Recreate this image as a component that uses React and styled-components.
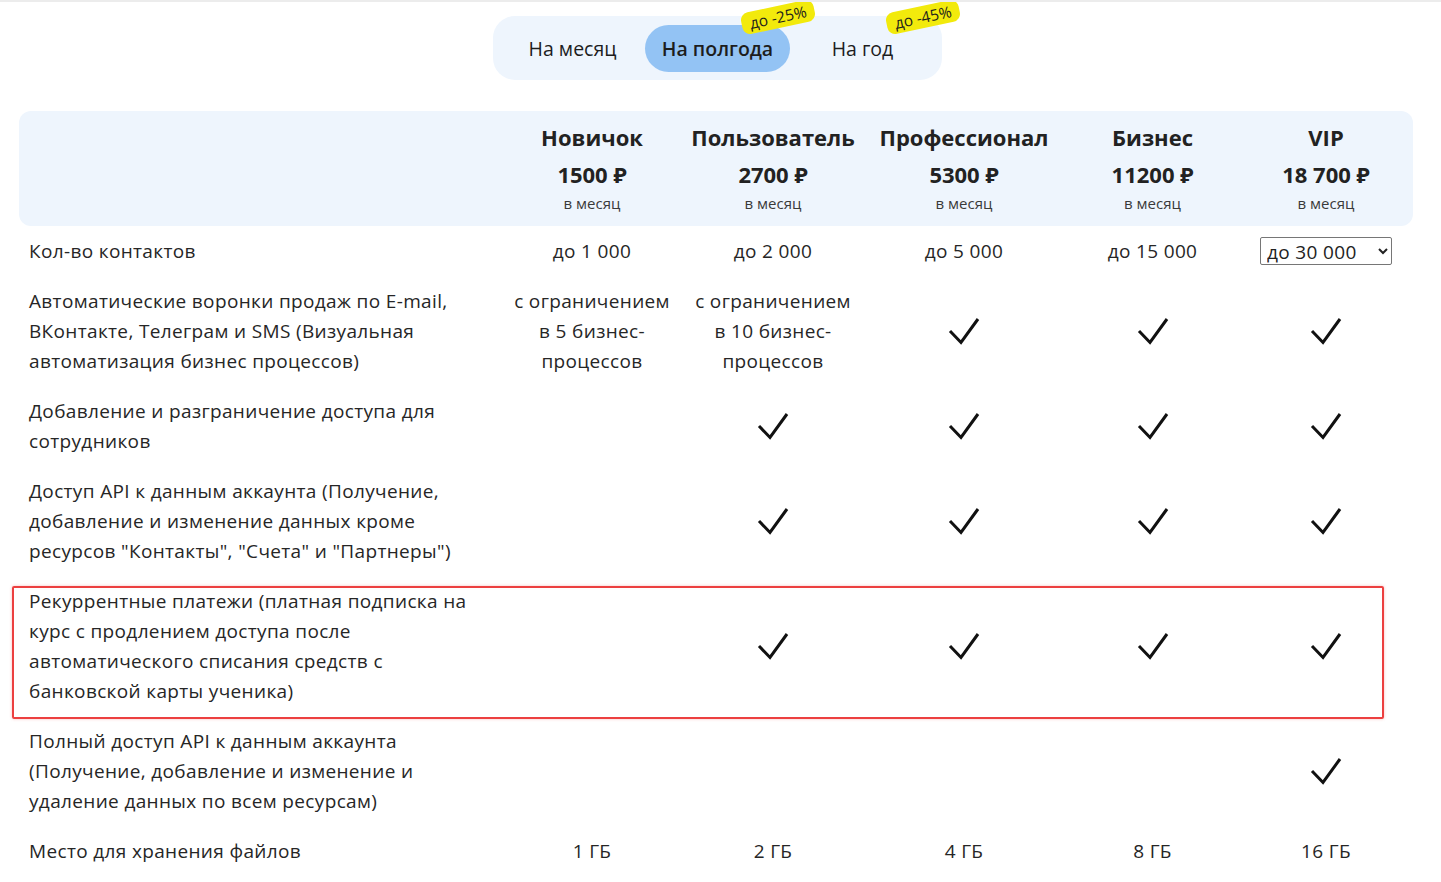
import React from 'react';
import styled, { createGlobalStyle } from 'styled-components';

const GlobalStyle = createGlobalStyle`
    body {
        margin: 0;
        background: #fff;
        font-family: "Open Sans", "Noto Sans", sans-serif;
        color: #222;
        border-top: 2px solid #ececec;
    }
`;

const Page = styled.div`
    padding: 14px 0 0 19px;
    width: 1394px;
`;

const ToggleWrap = styled.div`
    display: flex;
    justify-content: center;
    padding-left: 3px;
`;

const Toggle = styled.div`
    display: flex;
    background: #eef5fd;
    border-radius: 22px;
    padding: 9px 7px 8px;
`;

const TabButton = styled.div`
    position: relative;
    width: 145px;
    height: 47px;
    border-radius: 24px;
    display: flex;
    align-items: center;
    justify-content: center;
    font-size: 19.5px;
    font-weight: ${p => (p.active ? 600 : 500)};
    background: ${p => (p.active ? '#93c3f4' : 'transparent')};
    color: #1d1d1d;
`;

const Badge = styled.span`
    position: absolute;
    top: -19px;
    right: -25px;
    width: 74px;
    height: 22px;
    border-radius: 8px;
    background: #f2ea0c;
    color: #1d1d1d;
    font-size: 15.5px;
    font-weight: 500;
    line-height: 22px;
    display: flex;
    align-items: center;
    justify-content: center;
    transform: rotate(-12deg);
`;

const Table = styled.div`
    margin-top: 31px;
`;

const cols = '481px 184px 178px 204px 173px 174px';

const Head = styled.div`
    display: grid;
    grid-template-columns: ${cols};
    background: #eef5fd;
    border-radius: 12px;
    height: 115px;
    box-sizing: border-box;
    padding-top: 12px;
`;

const Plan = styled.div`
    display: flex;
    flex-direction: column;
    align-items: center;
`;

const PlanName = styled.div`
    font-size: 22px;
    font-weight: 700;
    line-height: 28px;
    white-space: nowrap;
`;

const Price = styled.div`
    font-size: 22px;
    font-weight: 700;
    line-height: 28px;
    margin-top: 9px;
`;

const Per = styled.div`
    font-size: 15px;
    color: #3a3a3a;
    line-height: 20px;
    margin-top: 5px;
`;

const Row = styled.div`
    position: relative;
    display: grid;
    grid-template-columns: ${cols};
    font-size: 19px;
    letter-spacing: 0.35px;
    line-height: 30px;
    color: #262626;

    ${p => p.marked && `
        &::after {
            content: '';
            position: absolute;
            left: -7px;
            right: 29px;
            top: 10px;
            bottom: -3px;
            border: 2px solid #ec4040;
            border-radius: 2px;
            box-shadow: 0 0 3px rgba(236, 64, 64, 0.35);
            pointer-events: none;
        }
    `}
`;

const Label = styled.div`
    padding: 10px 10px;
    white-space: nowrap;
`;

const Cell = styled.div`
    padding: 10px 4px;
    display: flex;
    align-items: center;
    justify-content: center;
    text-align: center;
    white-space: nowrap;
`;

const Select = styled.select`
    font-family: inherit;
    font-size: 19px;
    letter-spacing: 0.35px;
    color: #222;
    width: 132px;
    height: 28px;
    border: 1px solid #767676;
    border-radius: 2px;
    background: #fff;
    padding: 0 2px;
`;

const Check = () => (
    <svg width="32" height="28" viewBox="0 0 32 28">
        <path d="M2 14 L13 25.5 L30 2" fill="none" stroke="#111" strokeWidth="3" strokeLinejoin="miter" />
    </svg>
);

const plans = [
    { name: 'Новичок', price: '1500 ₽' },
    { name: 'Пользователь', price: '2700 ₽' },
    { name: 'Профессионал', price: '5300 ₽' },
    { name: 'Бизнес', price: '11200 ₽' },
    { name: 'VIP', price: '18 700 ₽' }
];

const V = 'check';
const limit = n => <>с ограничением<br />в {n} бизнес-<br />процессов</>;

const rows = [
    { label: ['Кол-во контактов'], values: ['до 1 000', 'до 2 000', 'до 5 000', 'до 15 000', 'select'] },
    {
        label: ['Автоматические воронки продаж по E-mail,', 'ВКонтакте, Телеграм и SMS (Визуальная', 'автоматизация бизнес процессов)'],
        values: [limit(5), limit(10), V, V, V]
    },
    { label: ['Добавление и разграничение доступа для', 'сотрудников'], values: ['', V, V, V, V] },
    {
        label: ['Доступ API к данным аккаунта (Получение,', 'добавление и изменение данных кроме', 'ресурсов "Контакты", "Счета" и "Партнеры")'],
        values: ['', V, V, V, V]
    },
    {
        label: ['Рекуррентные платежи (платная подписка на', 'курс с продлением доступа после', 'автоматического списания средств с', 'банковской карты ученика)'],
        values: ['', V, V, V, V],
        marked: true
    },
    {
        label: ['Полный доступ API к данным аккаунта', '(Получение, добавление и изменение и', 'удаление данных по всем ресурсам)'],
        values: ['', '', '', '', V]
    },
    { label: ['Место для хранения файлов'], values: ['1 ГБ', '2 ГБ', '4 ГБ', '8 ГБ', '16 ГБ'] }
];

const renderValue = v => {
    if (v === V) return <Check />;
    if (v === 'select') {
        return (
            <Select defaultValue="30">
                <option value="30">до 30 000</option>
                <option value="50">до 50 000</option>
            </Select>
        );
    }
    return <span>{v}</span>;
};

const App = () => {
    return (
        <Page>
            <GlobalStyle />
            <ToggleWrap>
                <Toggle>
                    <TabButton>На месяц</TabButton>
                    <TabButton active>
                        На полгода
                        <Badge>до -25%</Badge>
                    </TabButton>
                    <TabButton>
                        На год
                        <Badge>до -45%</Badge>
                    </TabButton>
                </Toggle>
            </ToggleWrap>
            <Table>
                <Head>
                    <div />
                    {plans.map(p => (
                        <Plan key={p.name}>
                            <PlanName>{p.name}</PlanName>
                            <Price>{p.price}</Price>
                            <Per>в месяц</Per>
                        </Plan>
                    ))}
                </Head>
                {rows.map((r, i) => (
                    <Row key={i} marked={r.marked}>
                        <Label>
                            {r.label.map((l, j) => (
                                <div key={j}>{l}</div>
                            ))}
                        </Label>
                        {r.values.map((v, j) => (
                            <Cell key={j}>{renderValue(v)}</Cell>
                        ))}
                    </Row>
                ))}
            </Table>
        </Page>
    );
};

export default App;
